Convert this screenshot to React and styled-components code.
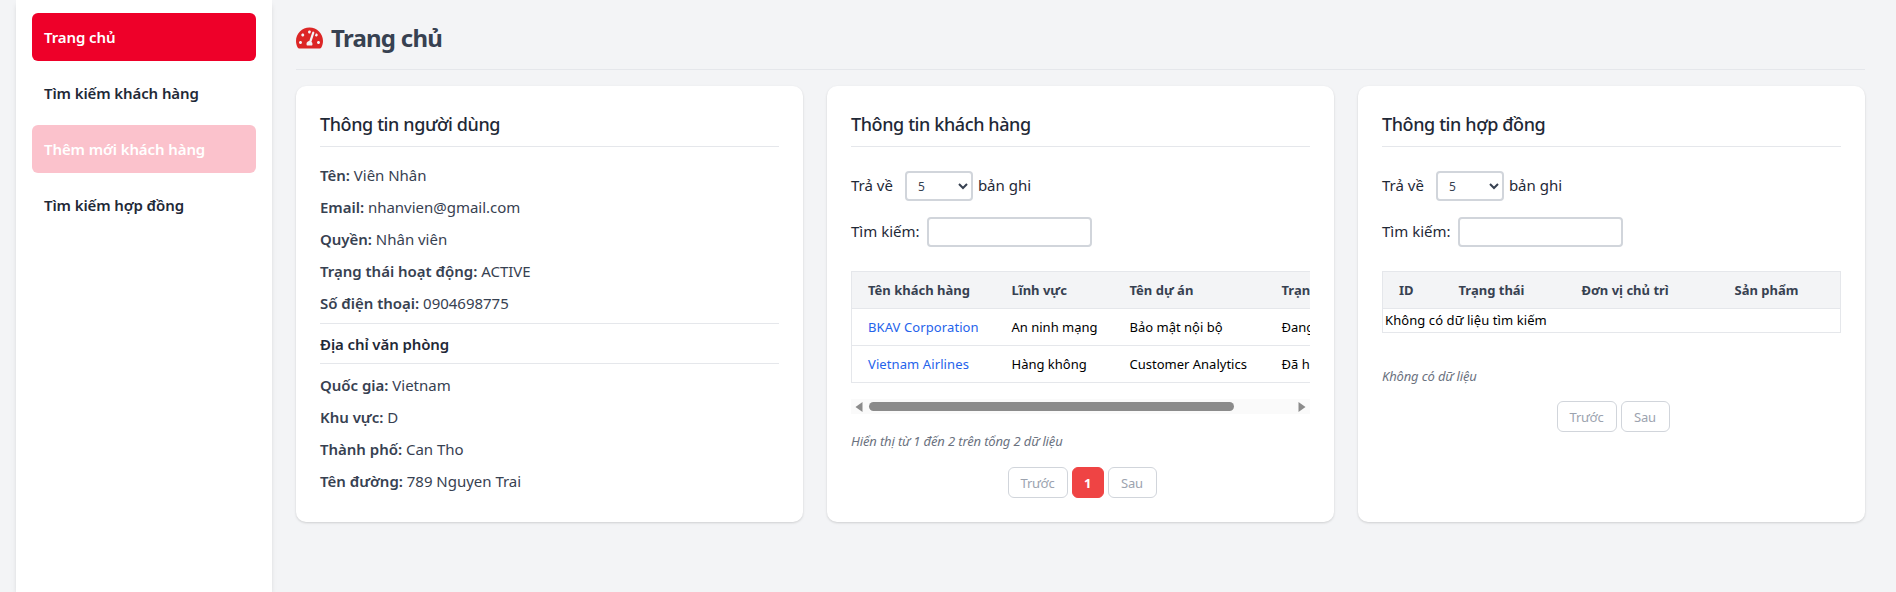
import React from "react";
import styled, { createGlobalStyle } from "styled-components";
import { FaTachometerAlt } from "react-icons/fa";

const Global = createGlobalStyle`
  html, body { margin: 0; padding: 0; height: 592px; overflow: hidden; background: #f3f4f6; }
  body { font-family: "Noto Sans", "Liberation Sans", sans-serif; color: #374151; }
  * { box-sizing: border-box; }
`;

const Page = styled.div`
  display: flex;
  height: 592px;
  padding-left: 16px;
  padding-right: 31px;
  gap: 24px;
`;

const Sidebar = styled.aside`
  width: 256px;
  flex: none;
  background: #fff;
  box-shadow: 0 4px 6px -1px rgba(0, 0, 0, 0.1), 0 2px 4px -2px rgba(0, 0, 0, 0.1);
  padding: 13px 16px 0;
  display: flex;
  flex-direction: column;
  gap: 8px;
`;

const NavItem = styled.a`
  height: 48px;
  display: flex;
  align-items: center;
  padding: 0 12px;
  border-radius: 6px;
  font-size: 15px;
  font-weight: 600;
  letter-spacing: -0.1px;
  color: ${(p) => (p.$variant === "active" || p.$variant === "pending" ? "#fff" : "#1f2937")};
  background: ${(p) => (p.$variant === "active" ? "#ee0029" : p.$variant === "pending" ? "#fbc2cc" : "transparent")};
`;

const Main = styled.main`
  flex: 1;
  min-width: 0;
  padding-top: 17px;
`;

const Header = styled.header`
  display: flex;
  align-items: center;
  gap: 8px;
  height: 53px;
  padding-bottom: 10px;
  border-bottom: 1px solid #e5e7eb;
  margin-bottom: 16px;
`;

const Title = styled.h1`
  margin: 0;
  font-size: 24px;
  line-height: 32px;
  font-weight: 700;
  letter-spacing: -0.75px;
  color: #374151;
`;

const HeaderIcon = styled(FaTachometerAlt)`
  width: 27px;
  height: 24px;
  color: #dc2626;
`;

const Cards = styled.div`
  display: grid;
  grid-template-columns: repeat(3, minmax(0, 1fr));
  gap: 24px;
`;

const Card = styled.section`
  background: #fff;
  border-radius: 10px;
  box-shadow: 0 1px 3px rgba(0, 0, 0, 0.1), 0 1px 2px rgba(0, 0, 0, 0.06);
  padding: 24px;
  height: 436px;
  min-width: 0;
`;

const CardTitle = styled.h2`
  margin: 0 0 ${(p) => p.$gap}px;
  height: 37px;
  line-height: 28px;
  padding-bottom: 8px;
  border-bottom: 1px solid #e5e7eb;
  font-size: 18px;
  font-weight: 500;
  letter-spacing: -0.4px;
  color: #1f2937;
`;

const InfoRow = styled.p`
  margin: 0 0 8px;
  height: 24px;
  line-height: 24px;
  font-size: 15px;
  letter-spacing: -0.02px;
  color: #374151;
  b { font-weight: 600; }
`;

const SubTitle = styled.h3`
  margin: 8px 0 9px;
  height: 41px;
  line-height: 40px;
  border-top: 1px solid #e5e7eb;
  border-bottom: 1px solid #e5e7eb;
  font-size: 15px;
  font-weight: 600;
  letter-spacing: -0.1px;
  color: #1f2937;
`;

const ControlRow = styled.div`
  display: flex;
  align-items: flex-start;
  height: 30px;
  line-height: 28px;
  margin-bottom: 16px;
  font-size: 15px;
  letter-spacing: 0;
  color: #1f2937;
`;

const Select = styled.select`
  width: 68px;
  height: 30px;
  margin: 0 5px 0 12px;
  padding: 0 0 0 7px;
  border: 2px solid #d1d5db;
  border-radius: 4px;
  background: #fff;
  font: 12px "Noto Sans", sans-serif;
  color: #374151;
`;

const SearchInput = styled.input`
  width: 165px;
  height: 30px;
  margin-left: 7px;
  border: 2px solid #d1d5db;
  border-radius: 4px;
  background: #fff;
`;

const TableClip = styled.div`
  margin-top: 24px;
  overflow: hidden;
`;

const Table = styled.table`
  border-collapse: collapse;
  table-layout: fixed;
  width: ${(p) => p.$width}px;
  font-size: 13px;
`;

const Th = styled.th`
  width: ${(p) => p.$w}px;
  height: 37px;
  padding: 0 16px;
  background: #f3f4f6;
  border: 1px solid #e5e7eb;
  border-width: 1px 0;
  text-align: left;
  font-weight: 700;
  color: #374151;
  white-space: nowrap;
  &:first-child { border-left-width: 1px; }
  &:last-child { border-right-width: 1px; }
`;

const Td = styled.td`
  height: 37px;
  padding: 0 16px;
  border: 1px solid #e5e7eb;
  border-width: 1px 0;
  color: #000;
  white-space: nowrap;
  overflow: hidden;
  &:first-child { border-left-width: 1px; }
  &:last-child { border-right-width: 1px; }
`;

const EmptyCell = styled.td`
  height: 24px;
  padding: 0 2px 2px;
  border: 1px solid #e5e7eb;
  letter-spacing: 0.08px;
  color: #000;
`;

const CustomerLink = styled.a`
  color: #2563eb;
  letter-spacing: 0.1px;
`;

const ScrollBar = styled.div`
  display: flex;
  align-items: center;
  height: 15px;
  margin-top: 16px;
  background: #fafafa;
`;

const ScrollArrow = styled.div`
  width: 18px;
  flex: none;
  display: flex;
  justify-content: ${(p) => (p.$end ? "flex-end" : "flex-start")};
  padding: 0 4px;
  svg { display: block; width: 8px; height: 10px; fill: #8b8b8b; }
`;

const ScrollTrack = styled.div`
  flex: 1;
`;

const ScrollThumb = styled.div`
  width: ${(p) => p.$w}px;
  height: 9px;
  border-radius: 5px;
  background: #8b8b8b;
`;

const Note = styled.p`
  margin: ${(p) => p.$top}px 0 0;
  height: 20px;
  line-height: 20px;
  font-size: 13px;
  font-style: italic;
  letter-spacing: -0.14px;
  color: #6b7280;
`;

const Pager = styled.div`
  display: flex;
  justify-content: center;
  gap: 4px;
  padding-left: 3px;
  margin-top: ${(p) => p.$top}px;
`;

const PageButton = styled.button`
  height: 31px;
  width: ${(p) => p.$w}px;
  padding: 0;
  border: 1px solid ${(p) => (p.$current ? "#ef4444" : "#d1d5db")};
  border-radius: 6px;
  background: ${(p) => (p.$current ? "#ef4444" : "#fff")};
  color: ${(p) => (p.$current ? "#fff" : "#9ca3af")};
  font: ${(p) => (p.$current ? 700 : 400)} 13px "Noto Sans", sans-serif;
  letter-spacing: -0.2px;
`;

const user = [["Tên", "Viên Nhân"], ["Email", "nhanvien@gmail.com"], ["Quyền", "Nhân viên"], ["Trạng thái hoạt động", "ACTIVE"], ["Số điện thoại", "0904698775"]];
const office = [["Quốc gia", "Vietnam"], ["Khu vực", "D"], ["Thành phố", "Can Tho"], ["Tên đường", "789 Nguyen Trai"]];
const customers = [
  ["BKAV Corporation", "An ninh mạng", "Bảo mật nội bộ", "Đang thực hiện"],
  ["Vietnam Airlines", "Hàng không", "Customer Analytics", "Đã hoàn thành"],
];

const Controls = () => (
  <>
    <ControlRow>
      Trả về
      <Select defaultValue="5"><option>5</option><option>10</option></Select>
      bản ghi
    </ControlRow>
    <ControlRow>
      Tìm kiếm:
      <SearchInput />
    </ControlRow>
  </>
);

export default function App() {
  return (
    <Page>
      <Global />
      <Sidebar>
        <NavItem $variant="active">Trang chủ</NavItem>
        <NavItem>Tìm kiếm khách hàng</NavItem>
        <NavItem $variant="pending">Thêm mới khách hàng</NavItem>
        <NavItem>Tìm kiếm hợp đồng</NavItem>
      </Sidebar>
      <Main>
        <Header>
          <HeaderIcon />
          <Title>Trang chủ</Title>
        </Header>
        <Cards>
          <Card>
            <CardTitle $gap={16}>Thông tin người dùng</CardTitle>
            {user.map(([k, v]) => <InfoRow key={k}><b>{k}:</b> {v}</InfoRow>)}
            <SubTitle>Địa chỉ văn phòng</SubTitle>
            {office.map(([k, v]) => <InfoRow key={k}><b>{k}:</b> {v}</InfoRow>)}
          </Card>
          <Card>
            <CardTitle $gap={24}>Thông tin khách hàng</CardTitle>
            <Controls />
            <TableClip>
              <Table $width={534}>
                <thead>
                  <tr>
                    <Th $w={144}>Tên khách hàng</Th>
                    <Th $w={118}>Lĩnh vực</Th>
                    <Th $w={152}>Tên dự án</Th>
                    <Th $w={120}>Trạng thái</Th>
                  </tr>
                </thead>
                <tbody>
                  {customers.map((c) => (
                    <tr key={c[0]}>
                      <Td><CustomerLink>{c[0]}</CustomerLink></Td>
                      <Td>{c[1]}</Td>
                      <Td>{c[2]}</Td>
                      <Td>{c[3]}</Td>
                    </tr>
                  ))}
                </tbody>
              </Table>
            </TableClip>
            <ScrollBar>
              <ScrollArrow>
                <svg viewBox="0 0 8 10"><path d="M7.5 0v10L0.5 5z" /></svg>
              </ScrollArrow>
              <ScrollTrack><ScrollThumb $w={365} /></ScrollTrack>
              <ScrollArrow $end>
                <svg viewBox="0 0 8 10"><path d="M0.5 0v10l7-5z" /></svg>
              </ScrollArrow>
            </ScrollBar>
            <Note $top={17}>Hiển thị từ 1 đến 2 trên tổng 2 dữ liệu</Note>
            <Pager $top={16}>
              <PageButton $w={60}>Trước</PageButton>
              <PageButton $w={32} $current>1</PageButton>
              <PageButton $w={49}>Sau</PageButton>
            </Pager>
          </Card>
          <Card>
            <CardTitle $gap={24}>Thông tin hợp đồng</CardTitle>
            <Controls />
            <TableClip>
              <Table $width={458}>
                <thead>
                  <tr>
                    <Th $w={60}>ID</Th>
                    <Th $w={123}>Trạng thái</Th>
                    <Th $w={153}>Đơn vị chủ trì</Th>
                    <Th $w={122}>Sản phẩm</Th>
                  </tr>
                </thead>
                <tbody>
                  <tr><EmptyCell colSpan={4}>Không có dữ liệu tìm kiếm</EmptyCell></tr>
                </tbody>
              </Table>
            </TableClip>
            <Note $top={33}>Không có dữ liệu</Note>
            <Pager $top={15}>
              <PageButton $w={60}>Trước</PageButton>
              <PageButton $w={49}>Sau</PageButton>
            </Pager>
          </Card>
        </Cards>
      </Main>
    </Page>
  );
}
